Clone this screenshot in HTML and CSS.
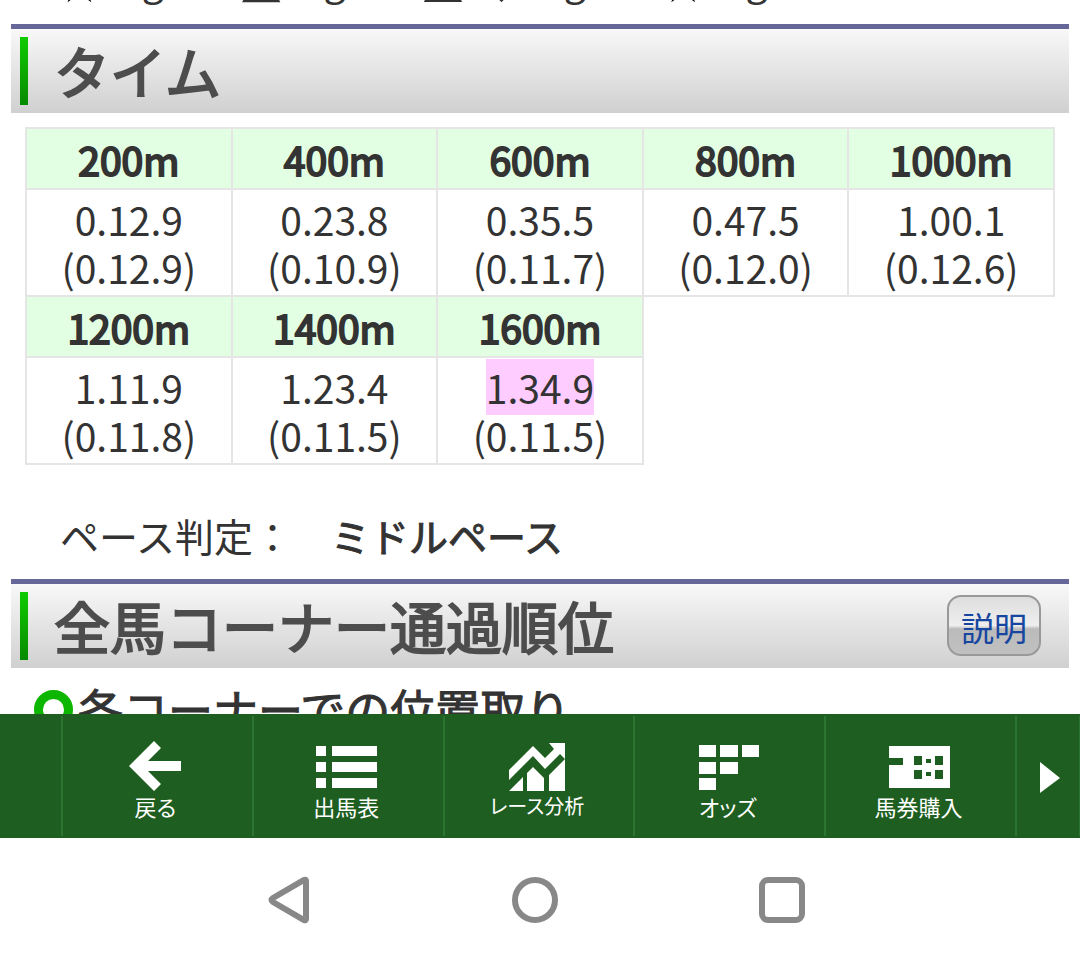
FILE: index.html
```html
<!doctype html>
<html lang="ja">
<head>
  <meta charset="utf-8">
  <meta name="viewport" content="width=device-width,initial-scale=1">
  <title>タイム</title>
  <link rel="stylesheet" href="styles.css">
</head>
<body>
  <main class="content">
    <div class="marks"><p><i class="star">★</i>4kg　　<i>▲</i>3kg　　<i>△</i>･<i>◇</i>2kg　　<i class="star">☆</i>1kg</p></div>

    <!-- タイム -->
    <section>
      <header class="bar">
        <h2>タイム</h2>
      </header>
      <table class="laps">
        <tr><th>200m</th><th>400m</th><th>600m</th><th>800m</th><th>1000m</th></tr>
        <tr>
          <td>0.12.9<br>(0.12.9)</td>
          <td>0.23.8<br>(0.10.9)</td>
          <td>0.35.5<br>(0.11.7)</td>
          <td>0.47.5<br>(0.12.0)</td>
          <td>1.00.1<br>(0.12.6)</td>
        </tr>
        <tr><th>1200m</th><th>1400m</th><th>1600m</th></tr>
        <tr>
          <td>1.11.9<br>(0.11.8)</td>
          <td>1.23.4<br>(0.11.5)</td>
          <td><mark>1.34.9</mark><br>(0.11.5)</td>
        </tr>
      </table>
      <p class="pace">ペース判定：　<b>ミドルペース</b></p>
    </section>

    <!-- コーナー -->
    <section>
      <header class="bar">
        <h2>全馬コーナー通過順位</h2>
        <button class="help" type="button">説明</button>
      </header>
      <h3 class="sub">各コーナーでの位置取り</h3>
    </section>
  </main>

  <nav class="menu">
    <span class="edge"></span>
    <a href="#back">
      <svg width="62" height="52" viewBox="0 0 62 52"><path d="M30 1l7 7-13 13h33v10H24l13 13-7 7L5 26z"/></svg>
      戻る
    </a>
    <a href="#entries">
      <svg width="62" height="52" viewBox="0 0 62 52"><path d="M1 6h10v10H1zM17 6h45v10H17zM1 22h10v10H1zM17 22h45v10H17zM1 38h10v10H1zM17 38h45v10H17z"/></svg>
      出馬表
    </a>
    <a href="#analysis" class="long">
      <svg width="62" height="52" viewBox="0 0 62 52"><path d="M3 30L27 6l12 12 9-9-5-6h16v16l-5-5-15 15-12-13L3 40zM3 51l14-14v14zM21 51V33l6-6 11 11v13zM43 51V35l16-16v32z"/></svg>
      レース分析
    </a>
    <a href="#odds">
      <svg width="62" height="52" viewBox="0 0 62 52"><path d="M2 5h17v12H2zM23 5h18v12H23zM45 5h17v12H45zM2 22h17v12H2zM23 22h18v12H23zM2 38h17v12H2z"/></svg>
      オッズ
    </a>
    <a href="#buy">
      <svg width="62" height="52" viewBox="0 0 62 52"><path fill-rule="evenodd" d="M1 6h61v42H1V25h14v-7H1zM26 16v9h8v-9zM47 16v9h8v-9zM26 30v9h8v-9zM47 30v9h8v-9zM38 19v4h5v-4zM38 32v4h5v-4z"/></svg>
      馬券購入
    </a>
    <button class="next" type="button" aria-label="次へ">
      <svg width="24" height="40" viewBox="0 0 24 40"><path d="M4 8v31l20-15z"/></svg>
    </button>
  </nav>

  <footer class="system">
    <button type="button" aria-label="戻る"><svg width="48" height="48" viewBox="0 0 48 48"><path d="M42 5v38q0 2-2 1L9 26q-3-2 0-4L40 4q2-1 2 1z"/></svg></button>
    <button type="button" aria-label="ホーム"><svg width="48" height="48" viewBox="0 0 48 48"><circle cx="24" cy="24" r="20"/></svg></button>
    <button type="button" aria-label="履歴"><svg width="48" height="48" viewBox="0 0 48 48"><rect x="4" y="4" width="40" height="40" rx="6"/></svg></button>
  </footer>
</body>
</html>
```
FILE: styles.css
```css
* { box-sizing:border-box; }
html, body { margin:0; padding:0; height:100%; }
body {
  display:flex; flex-direction:column; overflow:hidden;
  background:#fff; color:#333;
  font-family:"Noto Sans CJK JP", sans-serif; font-size:39px;
}
button { font-family:inherit; cursor:pointer; }
.content { flex:1; min-height:0; overflow:hidden; padding:0 11px; }

/* Weight allowance marks, scrolled mostly out of view */
.marks {
  display:flex; align-items:flex-end; height:24px; overflow:hidden;
  padding:0 0 21px 49px; line-height:48px; white-space:nowrap;
}
.marks p { height:48px; margin:0; }
.marks i {
  display:inline-flex; justify-content:center; width:39px;
  font:normal 50px/40px "DejaVu Sans", sans-serif;
}
.marks .star { vertical-align:-6px; color:#000; }

/* Section headings */
.bar {
  display:flex; align-items:flex-start; height:89px; padding:8px 28px 0 9px;
  border-top:5px solid #669;
  background:linear-gradient(#f8f8f8,#d0d0d0);
}
.bar::before {
  content:""; width:8px; height:68px; margin-right:26px;
  background:linear-gradient(#0fcb00,#088a00);
}
.bar h2 {
  flex:1; margin:0; font-size:56px; line-height:66px; font-weight:400;
  color:#4d4d4d; -webkit-text-stroke:2px #4d4d4d;
}
.help {
  width:94px; height:61px; margin-top:3px; padding:0;
  border:2px solid #999; border-radius:14px;
  background:linear-gradient(#dedede,#eee 50%,#bbb 56%,#c0c0c0);
  color:#1646a0; font-size:33px; line-height:60px;
}

/* Lap times */
.laps {
  width:calc(100% - 28px); margin:14px 14px 0; table-layout:fixed;
  border-collapse:collapse; text-align:center; line-height:48px;
}
.laps th, .laps td { border:2px solid #e5e5e5; padding:0; }
.laps th {
  height:61px; background:#e3ffe3;
  font-weight:400; -webkit-text-stroke:2px #333;
}
.laps td { height:107px; padding-top:1px; }
.laps mark { background:#fcf; color:inherit; }

.pace { margin:40px 0 14px; padding-left:49px; line-height:60px; }
.pace b { font-weight:400; -webkit-text-stroke:1px #333; }

.sub {
  display:flex; align-items:center; margin:8px 0 0 23px;
  font-size:45px; line-height:66px; font-weight:400;
  -webkit-text-stroke:1px #333;
}
.sub::before {
  content:""; width:21px; height:21px; margin-right:5px;
  border:9px solid #0db600; border-radius:50%;
}

/* Bottom menu */
.menu {
  display:flex; flex:none; height:124px; padding:2px 0;
  background:#1e5e20;
}
.menu a {
  flex:1; display:flex; flex-direction:column; align-items:center;
  padding:24px 4px 0 0; border-left:2px solid #2b7530;
  color:#fff; font-size:22px; line-height:28px; text-decoration:none;
  white-space:nowrap; font-feature-settings:"palt";
}
.menu .long { font-size:20px; }
.menu svg { fill:#fff; }
.edge { width:61px; }
.next {
  width:65px; padding:0; border:0;
  border-left:2px solid #2b7530; border-right:1px solid #2b7530;
  background:none;
}

/* System navigation */
.system {
  display:flex; flex:none; justify-content:center; gap:199px;
  height:124px; padding-right:10px;
}
.system button { width:48px; padding:0; border:0; background:none; }
.system svg { display:block; fill:none; stroke:#888; stroke-width:6px; }
```
